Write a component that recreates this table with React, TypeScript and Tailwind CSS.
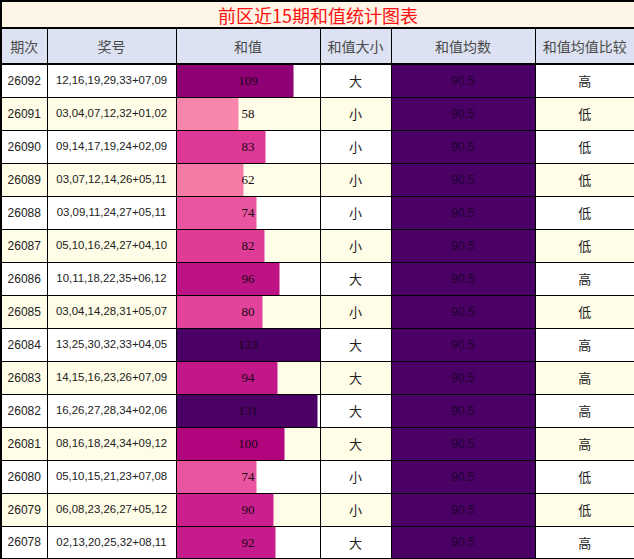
import React from "react";

type Row = { id: string; nums: string; sum: number; size: string; cmp: string; color: string; edge: string };

const rows: Row[] = [
  { id: "26092", nums: "12,16,19,29,33+07,09", sum: 109, size: "大", cmp: "高", color: "#8f0075", edge: "#c77bb4" },
  { id: "26091", nums: "03,04,07,12,32+01,02", sum: 58, size: "小", cmp: "低", color: "#f885ab", edge: "#fbc3d5" },
  { id: "26090", nums: "09,14,17,19,24+02,09", sum: 83, size: "小", cmp: "低", color: "#de3897", edge: "#ef9ccb" },
  { id: "26089", nums: "03,07,12,14,26+05,11", sum: 62, size: "小", cmp: "低", color: "#f57ba6", edge: "#fabdd2" },
  { id: "26088", nums: "03,09,11,24,27+05,11", sum: 74, size: "小", cmp: "低", color: "#e9569f", edge: "#f4abcf" },
  { id: "26087", nums: "05,10,16,24,27+04,10", sum: 82, size: "小", cmp: "低", color: "#df3c98", edge: "#ef9ecb" },
  { id: "26086", nums: "10,11,18,22,35+06,12", sum: 96, size: "大", cmp: "高", color: "#bd1384", edge: "#de89c1" },
  { id: "26085", nums: "03,04,14,28,31+05,07", sum: 80, size: "小", cmp: "低", color: "#e2449b", edge: "#f0a2cd" },
  { id: "26084", nums: "13,25,30,32,33+04,05", sum: 133, size: "大", cmp: "高", color: "#4b0066", edge: "#4b0066" },
  { id: "26083", nums: "14,15,16,23,26+07,09", sum: 94, size: "大", cmp: "高", color: "#c21788", edge: "#e08bc3" },
  { id: "26082", nums: "16,26,27,28,34+02,06", sum: 131, size: "大", cmp: "高", color: "#4b0066", edge: "#a580b2" },
  { id: "26081", nums: "08,16,18,24,34+09,12", sum: 100, size: "大", cmp: "高", color: "#b1057e", edge: "#d882be" },
  { id: "26080", nums: "05,10,15,21,23+07,08", sum: 74, size: "小", cmp: "低", color: "#e9569f", edge: "#f4abcf" },
  { id: "26079", nums: "06,08,23,26,27+05,12", sum: 90, size: "小", cmp: "低", color: "#ca1f8c", edge: "#e48fc5" },
  { id: "26078", nums: "02,13,20,25,32+08,11", sum: 92, size: "大", cmp: "高", color: "#c61b8a", edge: "#e28dc4" },
];

const sans = "font-['Liberation_Sans','Noto_Sans_CJK_SC',sans-serif]";
const cjk = "font-['Noto_Sans_CJK_SC','Liberation_Sans',sans-serif]";

export default function App() {
  return (
    <div className="w-[634px] h-[559px] bg-white">
      <table className="w-[634px] table-fixed border-collapse border-2 border-black">
        <colgroup>
          <col className="w-[46px]" />
          <col className="w-[129px]" />
          <col className="w-[144px]" />
          <col className="w-[71px]" />
          <col className="w-[144px]" />
          <col className="w-[100px]" />
        </colgroup>
        <thead>
          <tr className="h-[27px] bg-[#fdf5e6]">
            <th colSpan={6} className={`border-b-2 border-black p-0 text-center text-[18px] font-normal leading-none text-[#ff1010] ${cjk}`}>
              前区近15期和值统计图表
            </th>
          </tr>
          <tr className="h-[36px] bg-[#dce2f1]">
            {["期次", "奖号", "和值", "和值大小", "和值均数", "和值均值比较"].map((h) => (
              <th key={h} className={`border border-black border-b-2 p-0 text-center text-[14px] font-normal text-[#4a4a4a] ${cjk}`}>
                {h}
              </th>
            ))}
          </tr>
        </thead>
        <tbody>
          {rows.map((r, i) => {
            const bg = i % 2 === 0 ? "bg-white" : "bg-[#fffde7]";
            const w = Math.round((r.sum / 133) * 143);
            return (
              <tr key={r.id} className={`h-[33px] ${bg}`}>
                <td className={`border border-black p-0 text-center text-[12px] text-[#222] ${sans}`}>{r.id}</td>
                <td className={`border border-black p-0 text-center text-[11.4px] text-[#222] ${sans}`}>{r.nums}</td>
                <td className="border border-black p-0 h-[33px]">
                  <div className="grid h-full">
                    <div className="[grid-area:1/1] flex h-full">
                      <div className="h-full border-r" style={{ width: w, backgroundColor: r.color, borderColor: r.edge }} />
                    </div>
                    <div className="[grid-area:1/1] flex items-center justify-center text-[13px] text-[#1a0614] font-['Liberation_Serif',serif]">
                      {r.sum}
                    </div>
                  </div>
                </td>
                <td className={`border border-black p-0 text-center text-[13px] text-[#222] ${cjk}`}>{r.size}</td>
                <td className={`border border-black p-0 text-center bg-[#4b0066] text-[12px] text-[#1e0030] ${sans}`}>90.5</td>
                <td className={`border border-black p-0 text-center text-[13px] text-[#222] ${cjk}`}>{r.cmp}</td>
              </tr>
            );
          })}
        </tbody>
      </table>
    </div>
  );
}
